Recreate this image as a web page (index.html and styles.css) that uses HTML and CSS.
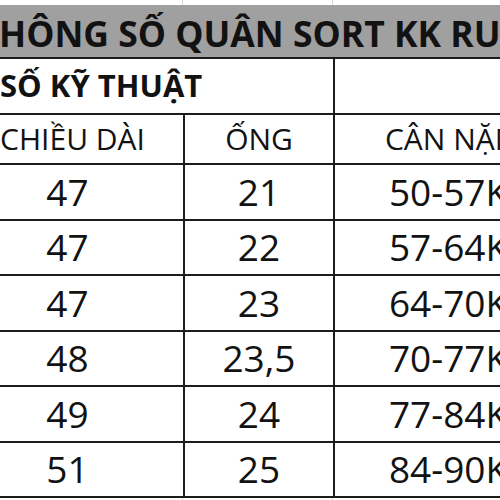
FILE: index.html
```html
<!DOCTYPE html>
<html lang="vi">
<head>
<meta charset="utf-8">
<title>Thông số quần sort</title>
<link rel="stylesheet" href="styles.css">
</head>
<body>
<div class="sheet">
  <div class="grid-strip top"><span></span><span></span><span></span></div>
  <table class="spec">
    <colgroup><col class="c1"><col class="c2"><col class="c3"></colgroup>
    <tr class="title"><td colspan="3">HÔNG SỐ QUÂN SORT KK RU</td></tr>
    <tr class="sub"><td colspan="2">SỐ KỸ THUẬT</td><td></td></tr>
    <tr class="head"><td class="first">CHIỀU DÀI</td><td>ỐNG</td><td>CÂN NẶNG</td></tr>
    <tr class="data"><td>47</td><td>21</td><td>50-57KG</td></tr>
    <tr class="data"><td>47</td><td>22</td><td>57-64KG</td></tr>
    <tr class="data"><td>47</td><td>23</td><td>64-70KG</td></tr>
    <tr class="data"><td>48</td><td>23,5</td><td>70-77KG</td></tr>
    <tr class="data"><td>49</td><td>24</td><td>77-84KG</td></tr>
    <tr class="data"><td>51</td><td>25</td><td>84-90KG</td></tr>
  </table>
  <div class="grid-strip bottom"><span></span><span></span><span></span></div>
</div>
</body>
</html>
```
FILE: styles.css
```css
html, body {
  margin: 0;
  padding: 0;
  background: #ffffff;
}

.sheet {
  width: 500px;
  height: 500px;
  overflow: hidden;
  font-family: "Open Sans", "Noto Sans", sans-serif;
  color: #121212;
}

.grid-strip {
  display: grid;
  grid-template-columns: 233px 150px 256px;
  margin-left: -50px;
  width: 639px;
}

.grid-strip span {
  border-right: 1px solid #d4d4d4;
}

.grid-strip.top {
  height: 5px;
}

.grid-strip.bottom {
  height: 12px;
}

.spec {
  border-collapse: collapse;
  table-layout: fixed;
  margin-left: -50px;
  width: 639px;
}

.c1 { width: 233px; }
.c2 { width: 150px; }
.c3 { width: 256px; }

.spec td {
  border: 2px solid #1c1c1c;
  padding: 0;
  text-align: center;
  vertical-align: middle;
  white-space: nowrap;
  overflow: hidden;
  line-height: 1.2;
}

.title td {
  background: #a0a0a0;
  border-top: 0;
  height: 53px;
  text-align: left;
  padding-left: 47px;
  padding-top: 4px;
  font-weight: 700;
  font-size: 35.5px;
  box-sizing: border-box;
}

.sub td {
  height: 54px;
  text-align: left;
  padding-left: 48px;
  font-weight: 700;
  font-size: 31px;
}

.head td {
  height: 48px;
  font-size: 30px;
}

.head td.first {
  padding-left: 10px;
}

.data td {
  height: 53.5px;
  font-size: 37px;
}
```
